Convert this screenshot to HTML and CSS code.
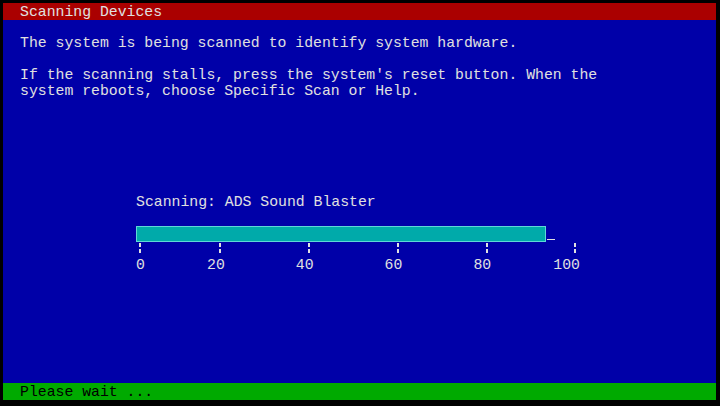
FILE: index.html
```html
<!DOCTYPE html>
<html lang="en">
<head>
  <meta charset="UTF-8" />
  <meta name="viewport" content="width=device-width, initial-scale=1.0" />
  <title>Scanning Devices</title>
  <link rel="stylesheet" href="styles.css">
</head>
<body>
  <div class="screen">
    <header class="title-bar">Scanning Devices</header>
    <main class="content">
      <p class="line">The system is being scanned to identify system hardware.</p>
      <p class="line gap">If the scanning stalls, press the system's reset button. When the</p>
      <p class="line">system reboots, choose Specific Scan or Help.</p>

      <div class="progress">
        <div class="line">Scanning: ADS Sound Blaster</div>
        <div class="bar-row">
          <div class="bar"></div>
          <span class="cursor"></span>
        </div>
        <div class="ticks">
          <span class="cell w9"><i class="tick"></i></span>
          <span class="cell w10"><i class="tick"></i></span>
          <span class="cell w10"><i class="tick"></i></span>
          <span class="cell w10"><i class="tick"></i></span>
          <span class="cell w10"><i class="tick"></i></span>
          <span class="cell w1"><i class="tick"></i></span>
        </div>
        <div class="labels">
          <span class="cell w8">0</span>
          <span class="cell w10">20</span>
          <span class="cell w10">40</span>
          <span class="cell w10">60</span>
          <span class="cell w9">80</span>
          <span class="cell w3">100</span>
        </div>
      </div>
    </main>
    <footer class="status-bar">Please wait ...</footer>
  </div>
</body>
</html>
```

FILE: styles.css
```css
body {
  margin: 0;
  background: #000;
  font-family: 'Liberation Mono', 'DejaVu Sans Mono', monospace;
  font-size: 14.8px;
  line-height: 16px;
  color: #e0e0e0;
}
.screen {
  margin: 3px 0 0 3px;
  width: 713px;
  height: 397px;
  background: #0000a8;
  display: flex;
  flex-direction: column;
}
.title-bar {
  background: #aa0000;
  padding: 1px 0 0 17px;
  height: 16px;
}
.content {
  flex: 1;
  padding: 15px 0 0 17px;
}
.line {
  margin: 0;
  white-space: pre;
}
.gap {
  margin-top: 16px;
}
.progress {
  margin: 95px 0 0 116px;
}
.bar-row {
  display: flex;
  align-items: flex-end;
  margin-top: 16px;
}
.bar {
  width: 46ch;
  height: 14px;
  background: #00aaaa;
  border: 1px solid #5fd7d7;
  box-sizing: content-box;
}
.cursor {
  width: 8px;
  height: 1px;
  margin: 0 0 2px 1px;
  background: #e0e0e0;
}
.ticks {
  display: flex;
  height: 15px;
  padding-top: 1px;
  box-sizing: border-box;
}
.labels {
  display: flex;
  white-space: pre;
}
.cell {
  display: block;
  flex: none;
}
.w1 { width: 1ch; }
.w3 { width: 3ch; }
.w8 { width: 8ch; }
.w9 { width: 9ch; }
.w10 { width: 10ch; }
.tick {
  display: block;
  width: 2px;
  height: 10px;
  margin-left: calc(0.5ch - 1px);
  background: repeating-linear-gradient(#e0e0e0 0 4px, transparent 4px 6px);
}
.status-bar {
  background: #00aa00;
  color: #000;
  height: 16px;
  padding: 1px 0 0 17px;
}
```
